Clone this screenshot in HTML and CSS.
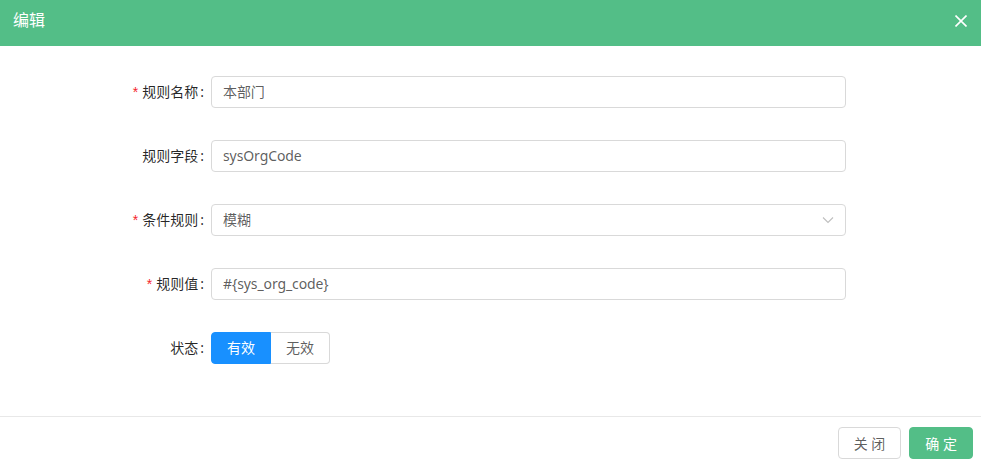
FILE: index.html
```html
<!DOCTYPE html>
<html lang="zh-CN">
<head>
  <meta charset="UTF-8">
  <title>编辑</title>
  <link rel="stylesheet" href="styles.css">
</head>
<body>
  <div class="modal">
    <div class="modal-header">
      <span class="modal-title">编辑</span>
      <span class="modal-close">
        <svg width="12" height="12" viewBox="0 0 12 12"><path d="M0.5 0.5 L11.5 11.5 M11.5 0.5 L0.5 11.5" stroke="#fff" stroke-width="1.6" fill="none"/></svg>
      </span>
    </div>

    <div class="modal-body">
      <div class="form-row">
        <label class="form-label required">规则名称</label>
        <div class="input">本部门</div>
      </div>
      <div class="form-row">
        <label class="form-label">规则字段</label>
        <div class="input">sysOrgCode</div>
      </div>
      <div class="form-row">
        <label class="form-label required">条件规则</label>
        <div class="input select">
          <span>模糊</span>
          <svg class="arrow" width="12" height="12" viewBox="0 0 12 12"><path d="M1 3.5 L6 8.5 L11 3.5" stroke="#bfbfbf" stroke-width="1.1" fill="none"/></svg>
        </div>
      </div>
      <div class="form-row">
        <label class="form-label required">规则值</label>
        <div class="input">#{sys_org_code}</div>
      </div>
      <div class="form-row">
        <label class="form-label">状态</label>
        <div class="radio-group">
          <span class="radio-btn checked">有效</span>
          <span class="radio-btn">无效</span>
        </div>
      </div>
    </div>

    <div class="modal-footer">
      <button class="btn">关 闭</button>
      <button class="btn btn-primary">确 定</button>
    </div>
  </div>
</body>
</html>
```

FILE: styles.css
```css
body {
  margin: 0;
  font-family: "Noto Sans", "Noto Sans CJK SC", sans-serif;
  font-size: 14px;
  color: rgba(0, 0, 0, 0.65);
  background-color: #fff;
}
.modal {
  width: 981px;
  height: 467px;
  display: flex;
  flex-direction: column;
}
.modal-header {
  height: 46px;
  box-sizing: border-box;
  background-color: #53be87;
  padding: 9px 13px 0;
  display: flex;
  justify-content: space-between;
}
.modal-title {
  color: #fff;
  font-size: 16px;
  line-height: 22px;
}
.modal-close {
  margin-top: 6px;
  margin-right: 1px;
  width: 12px;
  height: 12px;
  display: flex;
}
.modal-body {
  flex: 1;
  padding-top: 30px;
}
.form-row {
  display: grid;
  grid-template-columns: 211px 635px;
  height: 32px;
  margin-bottom: 32px;
}
.form-label {
  text-align: right;
  line-height: 32px;
  padding-right: 7px;
  color: rgba(0, 0, 0, 0.85);
}
.form-label::after {
  content: ":";
  margin-left: 2px;
}
.form-label.required::before {
  content: "*";
  color: #f5222d;
  margin-right: 4px;
  font-family: SimSun, "Liberation Sans", sans-serif;
  font-size: 14px;
}
.input {
  box-sizing: border-box;
  height: 32px;
  border: 1px solid #d9d9d9;
  border-radius: 4px;
  padding: 0 11px;
  line-height: 30px;
  letter-spacing: -0.1px;
}
.select {
  display: flex;
  justify-content: space-between;
  align-items: center;
}
.radio-group {
  display: flex;
}
.radio-btn {
  box-sizing: border-box;
  height: 32px;
  line-height: 30px;
  padding: 0 15px;
  border: 1px solid #d9d9d9;
  color: rgba(0, 0, 0, 0.65);
}
.radio-btn:first-child {
  border-radius: 4px 0 0 4px;
}
.radio-btn:last-child {
  border-left: none;
  border-radius: 0 4px 4px 0;
}
.radio-btn.checked {
  background-color: #1890ff;
  border-color: #1890ff;
  color: #fff;
}
.modal-footer {
  border-top: 1px solid #e8e8e8;
  padding: 10px 8px 0;
  height: 51px;
  box-sizing: border-box;
  display: flex;
  justify-content: flex-end;
  gap: 8px;
}
.btn {
  height: 32px;
  padding: 0 15px;
  font-family: inherit;
  font-size: 14px;
  border: 1px solid #d9d9d9;
  border-radius: 4px;
  background-color: #fff;
  color: rgba(0, 0, 0, 0.65);
}
.btn-primary {
  background-color: #53be87;
  border-color: #53be87;
  color: #fff;
}
```
